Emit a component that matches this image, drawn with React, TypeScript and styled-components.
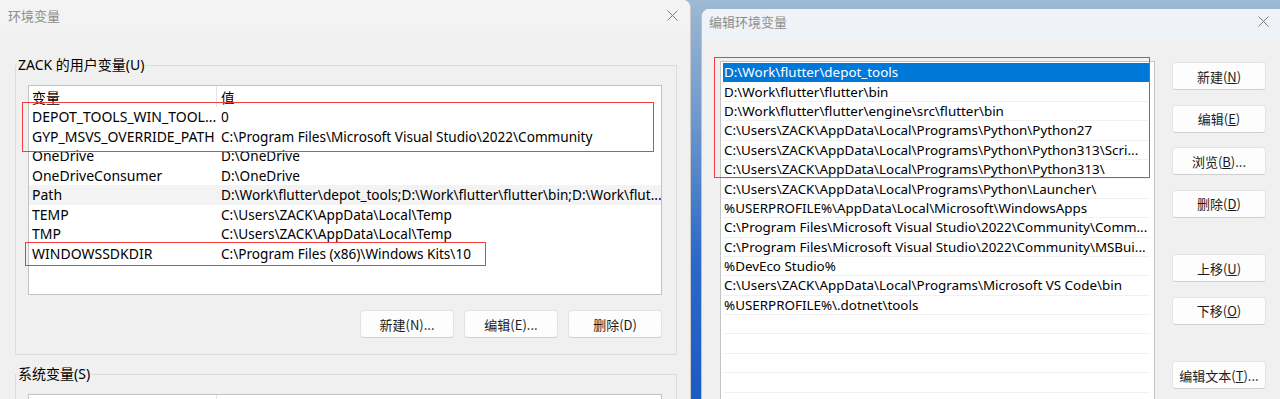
import React from "react";
import styled, { createGlobalStyle } from "styled-components";

const GlobalStyle = createGlobalStyle`
  html, body {
    margin: 0;
    padding: 0;
  }
  body {
    width: 1280px;
    height: 399px;
    overflow: hidden;
    background: linear-gradient(180deg, #9db9d3 0%, #6e98cd 30%, #2b68c9 65%, #1b5bc4 100%);
    font-family: "Noto Sans", "Noto Sans CJK SC", sans-serif;
    font-size: 13.6px;
    color: #000;
  }
`;

const Desktop = styled.div`
  position: relative;
  display: flex;
  gap: 10px;
  height: 399px;
`;

const LeftWindow = styled.div`
  flex-shrink: 0;
  width: 690px;
  height: 399px;
  display: flex;
  flex-direction: column;
  background: #f0f0f0;
  border-right: 1px solid #c9c9c9;
  border-top-right-radius: 8px;
  overflow: hidden;
`;

const RightWindow = styled.div`
  flex: 1;
  margin-top: 9px;
  display: flex;
  flex-direction: column;
  background: #f0f0f0;
  border-left: 1px solid #b7c3cf;
  border-top-left-radius: 8px;
  overflow: hidden;
`;

const TitleBar = styled.div<{ $tint: string; $h: number; $pl: number; $pr: number; $pb?: number }>`
  height: ${(p) => p.$h}px;
  box-sizing: border-box;
  flex-shrink: 0;
  display: flex;
  align-items: center;
  justify-content: space-between;
  padding: 0 ${(p) => p.$pr}px ${(p) => p.$pb ?? 0}px ${(p) => p.$pl}px;
  background: ${(p) => p.$tint};
`;

const Title = styled.span`
  font-family: "Noto Sans CJK SC", sans-serif;
  font-size: 13px;
  color: #8e8e8e;
`;

const CloseIcon = () => (
  <svg width="11" height="11" viewBox="0 0 11 11">
    <path d="M0.5 0.5L10.5 10.5M10.5 0.5L0.5 10.5" stroke="#7a7a7a" strokeWidth="1" fill="none" />
  </svg>
);

const Group = styled.fieldset<{ $top: number }>`
  margin: ${(p) => p.$top}px 13px 0 15px;
  padding: 10px 14px 16px 12px;
  border: 1px solid #dcdcdc;
  min-width: 0;
`;

const Legend = styled.legend`
  margin-left: -11px;
  padding: 0 1px;
  line-height: 20px;
  font-size: 14px;
`;

const ListView = styled.div<{ $h: number }>`
  height: ${(p) => p.$h}px;
  box-sizing: border-box;
  background: #fff;
  border: 1px solid #c3c3c3;
  overflow: hidden;
`;

const VarRow = styled.div<{ $header?: boolean; $hover?: boolean }>`
  display: grid;
  grid-template-columns: 187px 1fr;
  height: ${(p) => (p.$header ? 21 : 19.5)}px;
  align-items: center;
  background: ${(p) => (p.$hover ? "#f3f3f3" : "transparent")};
  white-space: nowrap;
`;

const NameCell = styled.span`
  padding-left: 3px;
  overflow: hidden;
  font-size: 14px;
`;

const ValueCell = styled.span<{ $header?: boolean }>`
  padding-left: 4px;
  overflow: hidden;
  align-self: stretch;
  display: flex;
  align-items: center;
  border-left: 1px solid ${(p) => (p.$header ? "#e5e5e5" : "transparent")};
`;

const ButtonRow = styled.div`
  display: flex;
  justify-content: flex-end;
  gap: 10px;
  margin-top: 15px;
`;

const Button = styled.div<{ $gap?: number }>`
  width: 94px;
  height: 28px;
  box-sizing: border-box;
  display: flex;
  align-items: center;
  justify-content: center;
  margin-top: ${(p) => p.$gap ?? 0}px;
  background: #fdfdfd;
  border: 1px solid #e3e3e3;
  border-bottom-color: #cfcfcf;
  border-radius: 4px;
  font-family: "Noto Sans CJK SC", sans-serif;
  font-size: 13px;
  color: #1b1b1b;
  flex-shrink: 0;
`;

const RightBody = styled.div`
  flex: 1;
  display: flex;
  gap: 17px;
  padding: 22px 14px 0 18px;
  min-height: 0;
`;

const PathList = styled.div`
  width: 435px;
  height: 400px;
  box-sizing: border-box;
  background: #fff;
  border: 1px solid #c3c3c3;
  padding: 1px 4px 0 2px;
  overflow: hidden;
  font-size: 13.4px;
`;

const PathRow = styled.div<{ $selected?: boolean }>`
  height: 19.4px;
  box-sizing: border-box;
  display: flex;
  align-items: center;
  padding-left: 1px;
  border-bottom: 1px solid ${(p) => (p.$selected ? "#0078d7" : "#f1f1f1")};
  background: ${(p) => (p.$selected ? "#0078d7" : "transparent")};
  color: ${(p) => (p.$selected ? "#fff" : "#000")};
  white-space: nowrap;
  overflow: hidden;
`;

const SideButtons = styled.div`
  display: flex;
  flex-direction: column;
  gap: 14.5px;
  padding-top: 1px;
`;

const Marker = styled.div<{ $x: number; $y: number; $w: number; $h: number }>`
  position: absolute;
  left: ${(p) => p.$x}px;
  top: ${(p) => p.$y}px;
  width: ${(p) => p.$w}px;
  height: ${(p) => p.$h}px;
  box-sizing: border-box;
  border: 1.5px solid #f43d3d;
  pointer-events: none;
`;

const userVars: [string, string][] = [
  ["DEPOT_TOOLS_WIN_TOOL...", "0"],
  ["GYP_MSVS_OVERRIDE_PATH", "C:\\Program Files\\Microsoft Visual Studio\\2022\\Community"],
  ["OneDrive", "D:\\OneDrive"],
  ["OneDriveConsumer", "D:\\OneDrive"],
  ["Path", "D:\\Work\\flutter\\depot_tools;D:\\Work\\flutter\\flutter\\bin;D:\\Work\\flut..."],
  ["TEMP", "C:\\Users\\ZACK\\AppData\\Local\\Temp"],
  ["TMP", "C:\\Users\\ZACK\\AppData\\Local\\Temp"],
  ["WINDOWSSDKDIR", "C:\\Program Files (x86)\\Windows Kits\\10"],
];

const paths: string[] = [
  "D:\\Work\\flutter\\depot_tools",
  "D:\\Work\\flutter\\flutter\\bin",
  "D:\\Work\\flutter\\flutter\\engine\\src\\flutter\\bin",
  "C:\\Users\\ZACK\\AppData\\Local\\Programs\\Python\\Python27",
  "C:\\Users\\ZACK\\AppData\\Local\\Programs\\Python\\Python313\\Scri...",
  "C:\\Users\\ZACK\\AppData\\Local\\Programs\\Python\\Python313\\",
  "C:\\Users\\ZACK\\AppData\\Local\\Programs\\Python\\Launcher\\",
  "%USERPROFILE%\\AppData\\Local\\Microsoft\\WindowsApps",
  "C:\\Program Files\\Microsoft Visual Studio\\2022\\Community\\Comm...",
  "C:\\Program Files\\Microsoft Visual Studio\\2022\\Community\\MSBui...",
  "%DevEco Studio%",
  "C:\\Users\\ZACK\\AppData\\Local\\Programs\\Microsoft VS Code\\bin",
  "%USERPROFILE%\\.dotnet\\tools",
  "",
  "",
  "",
  "",
  "",
];

const sideButtons: { label: string; key: string; tail?: string; gap?: number }[] = [
  { label: "新建(", key: "N", tail: ")" },
  { label: "编辑(", key: "E", tail: ")" },
  { label: "浏览(", key: "B", tail: ")..." },
  { label: "删除(", key: "D", tail: ")" },
  { label: "上移(", key: "U", tail: ")", gap: 22 },
  { label: "下移(", key: "O", tail: ")" },
  { label: "编辑文本(", key: "T", tail: ")...", gap: 22 },
];

export default function App() {
  return (
    <>
      <GlobalStyle />
      <Desktop>
        <LeftWindow>
          <TitleBar $tint="#f3f3f3" $h={31} $pl={8} $pr={12}>
            <Title>环境变量</Title>
            <CloseIcon />
          </TitleBar>

          <Group $top={24}>
            <Legend>ZACK 的用户变量(U)</Legend>
            <ListView $h={210}>
              <VarRow $header>
                <NameCell>变量</NameCell>
                <ValueCell $header>值</ValueCell>
              </VarRow>
              {userVars.map(([name, value]) => (
                <VarRow key={name} $hover={name === "Path"}>
                  <NameCell>{name}</NameCell>
                  <ValueCell>{value}</ValueCell>
                </VarRow>
              ))}
            </ListView>
            <ButtonRow>
              <Button>新建(N)...</Button>
              <Button>编辑(E)...</Button>
              <Button>删除(D)</Button>
            </ButtonRow>
          </Group>

          <Group $top={9}>
            <Legend>系统变量(S)</Legend>
            <ListView $h={60}>
              <VarRow $header>
                <NameCell />
                <ValueCell $header />
              </VarRow>
            </ListView>
          </Group>
        </LeftWindow>

        <RightWindow>
          <TitleBar $tint="#eff3f8" $h={30} $pl={7} $pr={11} $pb={5}>
            <Title>编辑环境变量</Title>
            <CloseIcon />
          </TitleBar>
          <RightBody>
            <PathList>
              {paths.map((p, i) => (
                <PathRow key={i} $selected={i === 0}>
                  {p}
                </PathRow>
              ))}
            </PathList>
            <SideButtons>
              {sideButtons.map((b) => (
                <Button key={b.key} $gap={b.gap}>
                  {b.label}
                  <u>{b.key}</u>
                  {b.tail}
                </Button>
              ))}
            </SideButtons>
          </RightBody>
        </RightWindow>

        <Marker $x={22} $y={102} $w={632} $h={50} />
        <Marker $x={25} $y={242} $w={461} $h={24} />
        <Marker $x={714} $y={57} $w={436} $h={121} />
      </Desktop>
    </>
  );
}
